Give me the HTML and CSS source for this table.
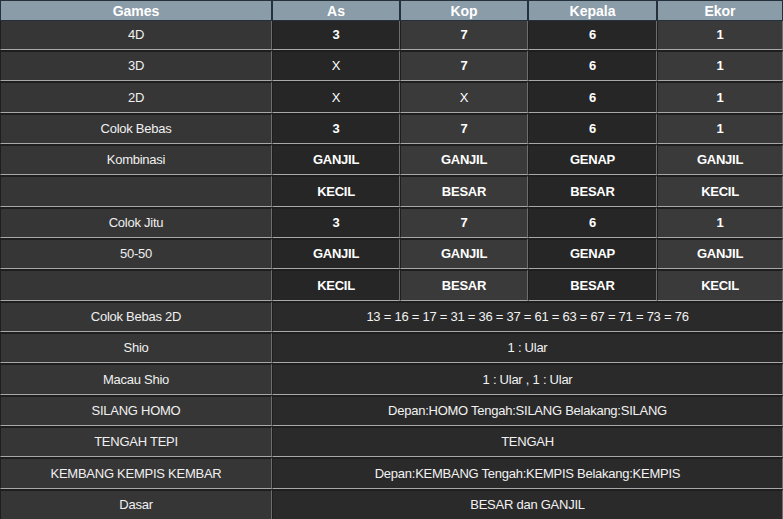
FILE: index.html
```html
<!DOCTYPE html>
<html>
<head>
<meta charset="utf-8">
<link rel="stylesheet" href="styles.css">
</head>
<body>
<table class="result">
  <colgroup>
    <col class="c-games"><col class="c-as"><col class="c-kop"><col class="c-kepala"><col class="c-ekor">
  </colgroup>
  <thead>
    <tr><th>Games</th><th>As</th><th>Kop</th><th>Kepala</th><th>Ekor</th></tr>
  </thead>
  <tbody>
    <tr><td class="lbl">4D</td><td class="dk">3</td><td class="lt">7</td><td class="dk">6</td><td class="lt">1</td></tr>
    <tr><td class="lbl">3D</td><td class="dk norm">X</td><td class="lt">7</td><td class="dk">6</td><td class="lt">1</td></tr>
    <tr><td class="lbl">2D</td><td class="dk norm">X</td><td class="lt norm">X</td><td class="dk">6</td><td class="lt">1</td></tr>
    <tr><td class="lbl">Colok Bebas</td><td class="dk">3</td><td class="lt">7</td><td class="dk">6</td><td class="lt">1</td></tr>
    <tr><td class="lbl">Kombinasi</td><td class="dk">GANJIL</td><td class="lt">GANJIL</td><td class="dk">GENAP</td><td class="lt">GANJIL</td></tr>
    <tr><td class="lbl"></td><td class="dk">KECIL</td><td class="lt">BESAR</td><td class="dk">BESAR</td><td class="lt">KECIL</td></tr>
    <tr><td class="lbl">Colok Jitu</td><td class="dk">3</td><td class="lt">7</td><td class="dk">6</td><td class="lt">1</td></tr>
    <tr><td class="lbl">50-50</td><td class="dk">GANJIL</td><td class="lt">GANJIL</td><td class="dk">GENAP</td><td class="lt">GANJIL</td></tr>
    <tr><td class="lbl"></td><td class="dk">KECIL</td><td class="lt">BESAR</td><td class="dk">BESAR</td><td class="lt">KECIL</td></tr>
    <tr><td class="lbl">Colok Bebas 2D</td><td class="wide" colspan="4">13 = 16 = 17 = 31 = 36 = 37 = 61 = 63 = 67 = 71 = 73 = 76</td></tr>
    <tr><td class="lbl">Shio</td><td class="wide" colspan="4">1 : Ular</td></tr>
    <tr><td class="lbl">Macau Shio</td><td class="wide" colspan="4">1 : Ular , 1 : Ular</td></tr>
    <tr><td class="lbl">SILANG HOMO</td><td class="wide" colspan="4">Depan:HOMO Tengah:SILANG Belakang:SILANG</td></tr>
    <tr><td class="lbl">TENGAH TEPI</td><td class="wide" colspan="4">TENGAH</td></tr>
    <tr><td class="lbl">KEMBANG KEMPIS KEMBAR</td><td class="wide" colspan="4">Depan:KEMBANG Tengah:KEMPIS Belakang:KEMPIS</td></tr>
    <tr><td class="lbl">Dasar</td><td class="wide" colspan="4">BESAR dan GANJIL</td></tr>
  </tbody>
</table>
</body>
</html>
```
FILE: styles.css
```css
html, body {
  margin: 0;
  padding: 0;
  background: #1e1e1e;
}
.result {
  width: 783px;
  border-collapse: separate;
  border-spacing: 0;
  table-layout: fixed;
  font-family: "Liberation Sans", Arial, sans-serif;
  font-size: 13px;
  letter-spacing: -0.25px;
  color: #f2f2f2;
  background: #1e1e1e;
}
.c-games { width: 272px; }
.c-as { width: 128px; }
.c-kop { width: 128px; }
.c-kepala { width: 129px; }
.c-ekor { width: 126px; }

.result th {
  height: 19px;
  padding: 0;
  background: #8a9ca8;
  color: #fff;
  font-size: 14px;
  font-weight: bold;
  letter-spacing: 0;
  text-align: center;
  border-left: 1px solid #24303a;
  border-right: 1px solid #24303a;
  border-top: 1px solid #24303a;
  border-bottom: 1px solid #24303a;
  line-height: 18px;
}
.result td {
  height: 28px;
  padding: 0;
  text-align: center;
  border-top: 2px solid #1e1e1e;
  border-left: 1px solid #1e1e1e;
  border-right: 1px solid #6e6e6e;
  border-bottom: 1px solid #a8a8a8;
  line-height: 16px;
}
.result tbody tr:first-child td {
  border-top: 0;
}
.result tbody tr:nth-child(3n) td {
  height: 29px;
}
.result .lbl {
  background: #363636;
  color: #f0f0f0;
}
.result .dk {
  background: #262626;
  color: #fff;
  font-weight: bold;
}
.result .lt {
  background: #3a3a3a;
  color: #fff;
  font-weight: bold;
}
.result .norm {
  font-weight: normal;
}
.result .wide {
  background: #2a2a2a;
  color: #f2f2f2;
}
```
